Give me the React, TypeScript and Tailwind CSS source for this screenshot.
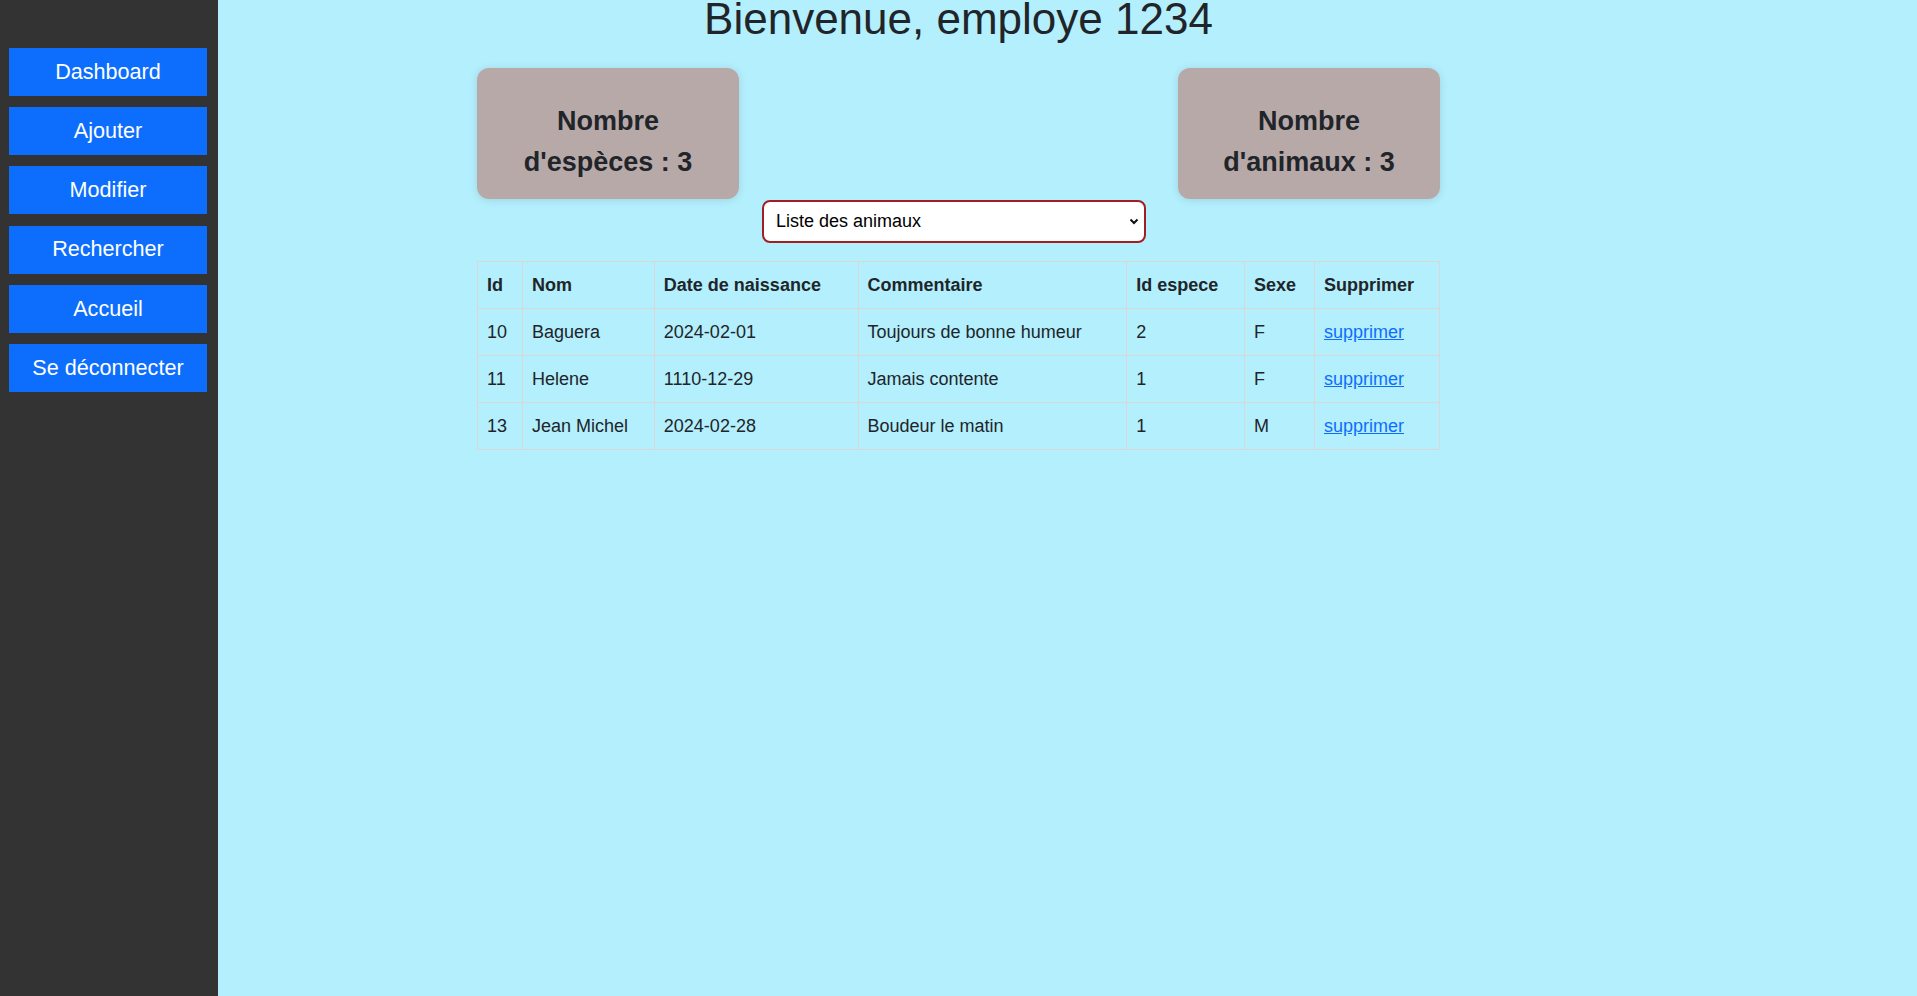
import { useState } from 'react'

const menu = ['Dashboard', 'Ajouter', 'Modifier', 'Rechercher', 'Accueil', 'Se déconnecter']

const columns = [
  { label: 'Id', w: 'w-[45px]' },
  { label: 'Nom', w: 'w-[132px]' },
  { label: 'Date de naissance', w: 'w-[204px]' },
  { label: 'Commentaire', w: 'w-[269px]' },
  { label: 'Id espece', w: 'w-[118px]' },
  { label: 'Sexe', w: 'w-[70px]' },
  { label: 'Supprimer', w: 'w-[125px]' },
]

const animaux = [
  { id: 10, nom: 'Baguera', naissance: '2024-02-01', commentaire: 'Toujours de bonne humeur', espece: 2, sexe: 'F' },
  { id: 11, nom: 'Helene', naissance: '1110-12-29', commentaire: 'Jamais contente', espece: 1, sexe: 'F' },
  { id: 13, nom: 'Jean Michel', naissance: '2024-02-28', commentaire: 'Boudeur le matin', espece: 1, sexe: 'M' },
]

export default function App() {
  const [vue, setVue] = useState('animaux')

  return (
    <div className="flex min-h-screen bg-[#b4effd] font-['Liberation_Sans',Arial,sans-serif] text-[#212529]">
      <aside className="flex w-[218px] shrink-0 flex-col gap-[11.2px] bg-[#333333] pl-[9px] pt-[48px]">
        {menu.map((item) => (
          <a
            key={item}
            href="#"
            className="flex h-[48px] w-[198px] items-center justify-center bg-[#0d6efd] text-[21.6px] text-white"
          >
            {item}
          </a>
        ))}
      </aside>

      <main className="flex-1">
        <div className="ml-[259px] w-[963px]">
          <h1 className="-mt-[7px] text-center text-[44px] font-normal leading-[1.2]">Bienvenue, employe 1234</h1>

          <div className="mt-[22px] flex justify-between">
            {["d'espèces : 3", "d'animaux : 3"].map((t) => (
              <div
                key={t}
                className="w-[262px] rounded-[12px] bg-[#b8a9a9] pb-[16px] pt-[33px] text-center text-[27px] font-bold leading-[41px] shadow-[0_1px_8px_rgba(0,0,0,0.12)]"
              >
                <div>Nombre</div>
                <div>{t}</div>
              </div>
            ))}
          </div>

          <div className="relative ml-[285px] mt-[1px] w-[384px]">
            <select
              value={vue}
              onChange={(e) => setVue(e.target.value)}
              className="h-[43px] w-full appearance-none rounded-[8px] border-2 border-[#a11f24] bg-white pl-[12px] text-[18px] text-black outline-none"
            >
              <option value="animaux">Liste des animaux</option>
              <option value="especes">Liste des espèces</option>
            </select>
            <svg
              className="pointer-events-none absolute right-[7px] top-[18px]"
              width="10"
              height="7"
              viewBox="0 0 10 7"
              fill="none"
            >
              <path d="M1.5 1.5 5 5l3.5-3.5" stroke="#111" strokeWidth="2" />
            </svg>
          </div>

          <table className="mt-[18px] w-[963px] border-collapse text-left text-[18px] leading-[28px]">
            <thead>
              <tr>
                {columns.map((c) => (
                  <th key={c.label} className={`${c.w} border border-[#dcd6d8] px-[9px] py-[9px] font-bold`}>
                    {c.label}
                  </th>
                ))}
              </tr>
            </thead>
            <tbody>
              {animaux.map((a) => (
                <tr key={a.id}>
                  <td className="border border-[#dcd6d8] px-[9px] py-[9px]">{a.id}</td>
                  <td className="border border-[#dcd6d8] px-[9px] py-[9px]">{a.nom}</td>
                  <td className="border border-[#dcd6d8] px-[9px] py-[9px]">{a.naissance}</td>
                  <td className="border border-[#dcd6d8] px-[9px] py-[9px]">{a.commentaire}</td>
                  <td className="border border-[#dcd6d8] px-[9px] py-[9px]">{a.espece}</td>
                  <td className="border border-[#dcd6d8] px-[9px] py-[9px]">{a.sexe}</td>
                  <td className="border border-[#dcd6d8] px-[9px] py-[9px]">
                    <a href="#" className="text-[#0d6efd] underline">supprimer</a>
                  </td>
                </tr>
              ))}
            </tbody>
          </table>
        </div>
      </main>
    </div>
  )
}
